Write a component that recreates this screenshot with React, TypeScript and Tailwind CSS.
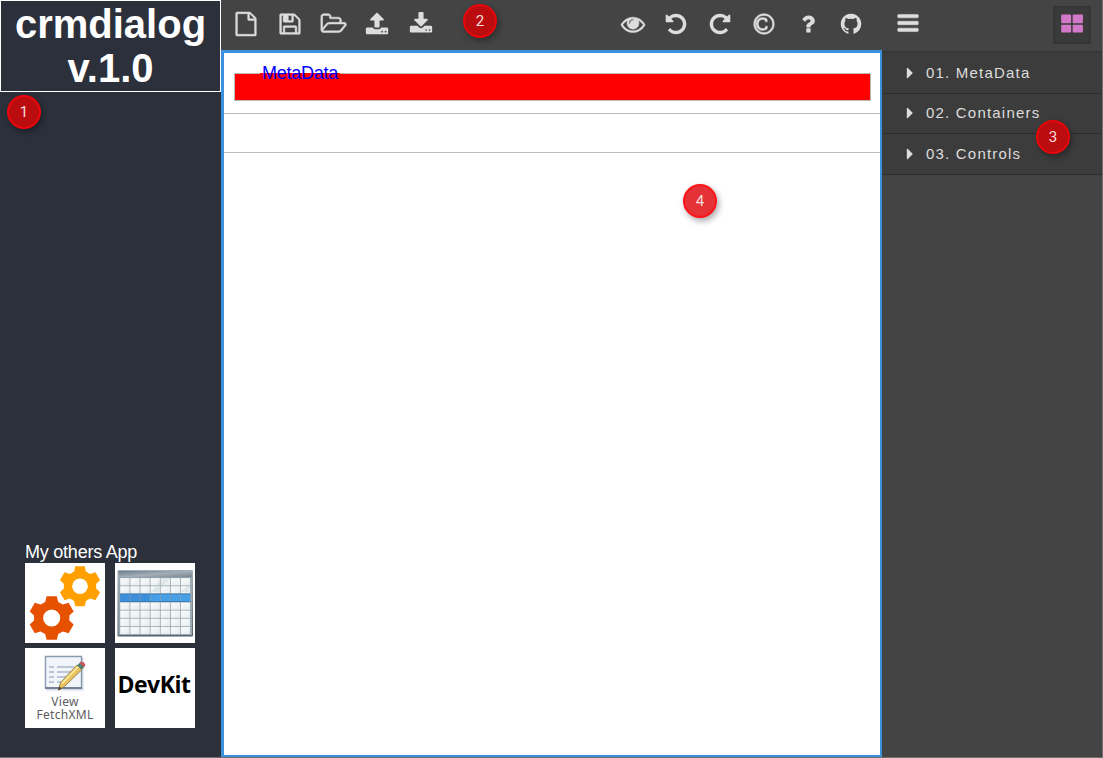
import React from 'react';

const P = {
  bars: 'M1664 1344v128q0 26-19 45t-45 19h-1408q-26 0-45-19t-19-45v-128q0-26 19-45t45-19h1408q26 0 45 19t19 45zm0-512v128q0 26-19 45t-45 19h-1408q-26 0-45-19t-19-45v-128q0-26 19-45t45-19h1408q26 0 45 19t19 45zm0-512v128q0 26-19 45t-45 19h-1408q-26 0-45-19t-19-45v-128q0-26 19-45t45-19h1408q26 0 45 19t19 45z',
  large: 'M832 1024v436q0 26-19 45t-45 19h-616q-26 0-45-19t-19-45v-436q0-26 19-45t45-19h616q26 0 45 19t19 45zM832 256v512q0 26-19 45t-45 19h-616q-26 0-45-19t-19-45v-512q0-26 19-45t45-19h616q26 0 45 19t19 45zM1712 1024v436q0 26-19 45t-45 19h-640q-26 0-45-19t-19-45v-436q0-26 19-45t45-19h640q26 0 45 19t19 45zM1712 256v512q0 26-19 45t-45 19h-640q-26 0-45-19t-19-45v-512q0-26 19-45t45-19h640q26 0 45 19t19 45z',
  file: 'M1596 380q28 28 48 76t20 88v1152q0 40-28 68t-68 28h-1344q-40 0-68-28t-28-68v-1600q0-40 28-68t68-28h896q40 0 88 20t76 48zm-444-244v376h376q-10-29-22-41l-313-313q-12-12-41-22zm384 1528v-1024h-416q-40 0-68-28t-28-68v-416h-768v1536h1280z',
  floppy: 'M512 1536h768v-384h-768v384zm896 0h128v-896q0-14-10-38.5t-20-34.5l-281-281q-10-10-34-20t-39-10v416q0 40-28 68t-68 28h-576q-40 0-68-28t-28-68v-416h-128v1280h128v-416q0-40 28-68t68-28h832q40 0 68 28t28 68v416zm-384-928v-320q0-13-9.5-22.5t-22.5-9.5h-192q-13 0-22.5 9.5t-9.5 22.5v320q0 13 9.5 22.5t22.5 9.5h192q13 0 22.5-9.5t9.5-22.5zm640 32v928q0 40-28 68t-68 28h-1344q-40 0-68-28t-28-68v-1344q0-40 28-68t68-28h928q40 0 88 20t76 48l280 280q28 28 48 76t20 88z',
  folder: 'M1845 931q0-35-53-35h-1088q-40 0-85.5 21.5t-71.5 52.5l-294 363q-18 24-18 40 0 35 53 35h1088q40 0 86-22t71-53l294-363q18-22 18-39zm-1141-163h768v-160q0-40-28-68t-68-28h-576q-40 0-68-28t-28-68v-64q0-40-28-68t-68-28h-320q-40 0-68 28t-28 68v853l256-315q44-53 116-87.5t140-34.5zm1269 163q0 62-46 120l-295 363q-43 53-116 87.5t-140 34.5h-1088q-92 0-158-66t-66-158v-960q0-92 66-158t158-66h320q92 0 158 66t66 158v32h544q92 0 158 66t66 158v160h192q54 0 99 24.5t67 70.5q15 32 15 68z',
  upload: 'M1344 1472q0-26-19-45t-45-19-45 19-19 45 19 45 45 19 45-19 19-45zm256 0q0-26-19-45t-45-19-45 19-19 45 19 45 45 19 45-19 19-45zm128-224v320q0 40-28 68t-68 28h-1472q-40 0-68-28t-28-68v-320q0-40 28-68t68-28h427q21 56 70.5 92t110.5 36h256q61 0 110.5-36t70.5-92h427q40 0 68 28t28 68zm-325-648q-17 40-59 40h-256v448q0 26-19 45t-45 19h-256q-26 0-45-19t-19-45v-448h-256q-42 0-59-40-17-39 14-69l448-448q18-19 45-19t45 19l448 448q31 30 14 69z',
  download: 'M1344 1344q0-26-19-45t-45-19-45 19-19 45 19 45 45 19 45-19 19-45zm256 0q0-26-19-45t-45-19-45 19-19 45 19 45 45 19 45-19 19-45zm128-224v320q0 40-28 68t-68 28h-1472q-40 0-68-28t-28-68v-320q0-40 28-68t68-28h465l135 136q58 56 136 56t136-56l136-136h464q40 0 68 28t28 68zm-325-569q17 41-14 70l-448 448q-18 19-45 19t-45-19l-448-448q-31-29-14-70 17-39 59-39h256v-448q0-26 19-45t45-19h256q26 0 45 19t19 45v448h256q42 0 59 39z',
  eye: 'M1664 960q-152-236-381-353 61 104 61 225 0 185-131.5 316.5t-316.5 131.5-316.5-131.5-131.5-316.5q0-121 61-225-229 117-381 353 133 205 333.5 326.5t434.5 121.5 434.5-121.5 333.5-326.5zm-720-384q0-20-14-34t-34-14q-125 0-214.5 89.5t-89.5 214.5q0 20 14 34t34 14 34-14 14-34q0-86 61-147t147-61q20 0 34-14t14-34zm848 384q0 34-20 69-140 230-376.5 368.5t-499.5 138.5-499.5-139-376.5-368q-20-35-20-69t20-69q140-229 376.5-368t499.5-139 499.5 139 376.5 368q20 35 20 69z',
  undo: 'M1664 896q0 156-61 298t-164 245-245 164-298 61q-172 0-327-72.5t-264-204.5q-7-10-6.5-22.5t8.5-20.5l137-138q10-9 25-9 16 2 23 12 73 95 179 147t225 52q104 0 198.5-40.5t163.5-109.5 109.5-163.5 40.5-198.5-40.5-198.5-109.5-163.5-163.5-109.5-198.5-40.5q-98 0-188 35.5t-160 101.5l137 138q31 30 14 69-17 40-59 40h-448q-26 0-45-19t-19-45v-448q0-42 40-59 39-17 69 14l130 129q107-101 244.5-156.5t284.5-55.5q156 0 298 61t245 164 164 245 61 298z',
  question: 'M1088 1256v240q0 16-12 28t-28 12h-240q-16 0-28-12t-12-28v-240q0-16 12-28t28-12h240q16 0 28 12t12 28zm316-600q0 54-15.5 101t-35 76.5-55 59.5-57.5 43.5-61 35.5q-41 23-68.5 65t-27.5 67q0 17-12 32.5t-28 15.5h-240q-15 0-25.5-18.5t-10.5-37.5v-45q0-83 65-156.5t143-108.5q59-27 84-56t25-76q0-42-46.5-74t-107.5-32q-65 0-108 29-35 25-107 115-13 16-31 16-12 0-25-8l-164-125q-13-10-15.5-25t5.5-28q160-266 464-266 80 0 161 31t146 83 106 127.5 41 158.5z',
  copyright: 'M1150 1074v109q0 50-36.5 89t-94 60.5-118 32.5-117.5 11q-205 0-342.5-139t-137.5-346q0-203 136-339t339-136q34 0 75.5 4.5t93 18 92.5 34 69 56.5 28 81v109q0 16-16 16h-118q-16 0-16-16v-70q0-43-65.5-67.5t-137.5-24.5q-140 0-228.5 91.5t-88.5 237.5q0 151 91.5 249.5t233.5 98.5q68 0 138-24t70-66v-70q0-7 4.5-11.5t10.5-4.5h119q6 0 11 4.5t5 11.5zm-254-818q-130 0-248.5 51t-204 136.5-136.5 204-51 248.5 51 248.5 136.5 204 204 136.5 248.5 51 248.5-51 204-136.5 136.5-204 51-248.5-51-248.5-136.5-204-204-136.5-248.5-51zm768 640q0 209-103 385.5t-279.5 279.5-385.5 103-385.5-103-279.5-279.5-103-385.5 103-385.5 279.5-279.5 385.5-103 385.5 103 279.5 279.5 103 385.5z',
  github: 'M896 128q209 0 385.5 103t279.5 279.5 103 385.5q0 251-146.5 451.5t-378.5 277.5q-27 5-40-7t-13-30q0-3 .5-76.5t.5-134.5q0-97-52-142 57-6 102.5-18t94-39 81-66.5 53-105 20.5-150.5q0-119-79-206 37-91-8-204-28-9-81 11t-92 44l-38 24q-93-26-192-26t-192 26q-16-11-42.5-27t-83.5-38.5-85-13.5q-45 113-8 204-79 87-79 206 0 85 20.5 150t52.5 105 80.5 67 94 39 102.5 18q-39 36-49 103-21 10-45 15t-57 5-65.5-21.5-55.5-62.5q-19-32-48.5-52t-49.5-24l-20-3q-21 0-29 4.5t-5 11.5 9 14 13 12l7 5q22 10 43.5 38t31.5 51l10 23q13 38 44 61.5t67 30 69.5 7 55.5-3.5l23-4q0 38 .5 88.5t.5 54.5q0 18-13 30t-40 7q-232-77-378.5-277.5t-146.5-451.5q0-209 103-385.5t279.5-279.5 385.5-103z',
  caret: 'M1152 896q0 26-19 45l-448 448q-19 19-45 19t-45-19-19-45v-896q0-26 19-45t45-19 45 19l448 448q19 19 19 45z',
};

type IconName = keyof typeof P;

const outlined: IconName[] = ['file', 'floppy', 'folder', 'copyright', 'eye', 'bars'];

function Icon({ name, flip = false }: { name: IconName; flip?: boolean }) {
  const wide = name === 'folder';
  const size = wide ? 'h-6 w-[27.4px]' : 'size-6';
  return (
    <svg
      viewBox={wide ? '0 0 2048 1792' : '0 0 1792 1792'}
      className={`${size} shrink-0 overflow-visible fill-current ${flip ? '-scale-x-100' : ''}`}
    >
      <path d={P[name]} stroke="currentColor" strokeWidth={outlined.includes(name) ? 38 : 0} />
    </svg>
  );
}

function Tool({ name, flip }: { name: IconName; flip?: boolean }) {
  return (
    <button className="flex w-[43.75px] shrink-0 justify-center">
      <Icon name={name} flip={flip} />
    </button>
  );
}

function Badge({ n, className }: { n: number; className: string }) {
  return (
    <span
      className={`absolute z-10 flex size-[34px] items-center justify-center rounded-full border-2 font-['Roboto',sans-serif] text-[15px] text-[#f5dede] shadow-[2px_3px_6px_rgba(0,0,0,0.35)] ${className}`}
    >
      {n}
    </span>
  );
}

const tooth = 'M-5.5-20h11l1.5 6.2 5 2.8 6.2-2 5.4 9.4-4.6 4.3v5.6l4.6 4.3-5.4 9.4-6.2-2-5 2.8L5.500 27h-11L-7 20.800l-5-2.800-6.200 2-5.400-9.400L-19 6.300V.7l-4.600-4.300 5.400-9.400 6.200 2 5-2.800z';

function Gear({ x, y, s, color }: { x: number; y: number; s: number; color: string }) {
  return (
    <g transform={`translate(${x} ${y}) scale(${s}) translate(0 -3.5)`}>
      <path d={tooth} fill={color} />
      <circle cy="3.5" r="9.2" fill="#fff" />
    </g>
  );
}

function GearsTile() {
  return (
    <svg viewBox="0 0 80 80" className="size-20 bg-white">
      <Gear x={55} y={23.2} s={0.85} color="#ffa000" />
      <Gear x={26.7} y={55} s={0.93} color="#e65100" />
    </svg>
  );
}

function TableTile() {
  const seven = [0, 1, 2, 3, 4, 5, 6];
  return (
    <svg viewBox="0 0 80 80" className="size-20 bg-white">
      <defs>
        <linearGradient id="frame" x1="0" y1="0" x2="0" y2="1">
          <stop offset="0" stopColor="#a3b0b9" />
          <stop offset="1" stopColor="#53636d" />
        </linearGradient>
        <linearGradient id="head" x1="0" y1="0" x2="1" y2="1">
          <stop offset="0" stopColor="#6f7e8b" />
          <stop offset=".5" stopColor="#a2afb9" />
          <stop offset="1" stopColor="#75838e" />
        </linearGradient>
        <linearGradient id="cell" x1="0" y1="0" x2="1" y2="1">
          <stop offset="0" stopColor="#fafcfc" />
          <stop offset="1" stopColor="#e6edef" />
        </linearGradient>
      </defs>
      <rect x="2.500" y="7" width="75.500" height="66.500" rx="1" fill="url(#frame)" />
      <rect x="3.500" y="8" width="73.500" height="6.500" fill="url(#head)" />
      <rect x="3.500" y="14.500" width="73.500" height="57.500" fill="#9caab2" />
      <rect x="4.500" y="14.500" width="71.500" height="57" fill="#8d9ba4" />
      {seven.map((r) =>
        seven.map((c) => (
          <rect
            key={`${r}-${c}`}
            x={5.2 + c * 10.1}
            y={15.1 + r * 8.1}
            width="9.4"
            height="7.4"
            fill={r === 2 ? (c < 3 ? '#398fdb' : '#46a0e8') : 'url(#cell)'}
          />
        )),
      )}
      <path d="M5 30.500h70.500v1H5zM5 38h70.500v1H5z" fill="#357fbd" />
      <path d="M36 29 47 15h8L43 29zM65 29l9-7v7z" fill="#b9cfcd" opacity=".35" />
    </svg>
  );
}

function FetchTile() {
  return (
    <div className="flex size-20 flex-col items-center bg-white pt-[4px]">
      <svg viewBox="0 0 44 40" className="h-10 w-11 shrink-0">
        <path d="M3 5.500h37.500v33H3z" fill="#d5dbe3" />
        <path d="M2.500 4.500h36v31.500h-36z" fill="#f1f5fa" stroke="#8b9bb2" strokeWidth="1.400" />
        <path d="M2 36h37" stroke="#64748a" strokeWidth="1.500" />
        <path d="M6 15h5M6 20h5M6 25h5M6 30h5M14 15h17M14 20h14M14 25h9M14 30h4" stroke="#a9b7ca" strokeWidth="1.700" />
        <path d="m34 13 5 4.500L22 34l-6.500 4 2-7.500z" fill="#e8c25f" stroke="#8a7444" strokeWidth=".8" />
        <path d="M35.500 14.500 19 31.500" stroke="#fbeaa0" strokeWidth="1.700" />
        <path d="m36.500 11 1.500-1.500q4 .5 4.500 4L40.500 15.500z" fill="#c8545c" />
        <path d="m34 13.500 2.500-2.500 4.500 4.500-2.500 2z" fill="#4c8171" />
        <path d="m15 38.500 1-4 3 2z" fill="#4a4238" />
      </svg>
      <div className="mt-[3px] text-center font-['Noto_Sans',sans-serif] text-[12px] leading-[13px] tracking-[0.3px] text-[#5c5c5c]">
        <div>View</div>
        <div>FetchXML</div>
      </div>
    </div>
  );
}

export default function App() {
  return (
    <div className="relative flex h-[758px] w-[1103px] overflow-hidden border-r border-b border-[#707070] bg-[#444] font-['Liberation_Sans',Arial,sans-serif]">
      <aside className="flex w-[221px] shrink-0 flex-col bg-[#2c303b] text-white">
        <h1 className="h-[92px] border border-white pt-px text-center text-[40px] leading-[44px] font-bold">
          crmdialog
          <br />
          v.1.0
        </h1>
        <div className="mt-[449px] ml-[25px] w-[170px]">
          <div className="h-[22px] text-[18px] leading-[22px] tracking-[-0.23px]">My others App</div>
          <div className="grid grid-cols-2 gap-x-[10px] gap-y-[5px]">
            <GearsTile />
            <TableTile />
            <FetchTile />
            <div className="flex size-20 items-center justify-center bg-white pr-[2px] pb-[7px] font-['Open_Sans',sans-serif] text-[23px] font-bold text-black">
              <span className="tracking-[-0.5px]">DevKit</span>
            </div>
          </div>
        </div>
      </aside>

      <main className="flex w-[661px] shrink-0 flex-col">
        <div className="flex h-[50px] justify-between pt-[11.7px] pr-[8.8px] pl-[3px] text-[#ddd]">
          <div className="flex">
            <Tool name="file" />
            <Tool name="floppy" />
            <Tool name="folder" />
            <Tool name="upload" />
            <Tool name="download" />
          </div>
          <div className="flex">
            <Tool name="eye" />
            <Tool name="undo" />
            <Tool name="undo" flip />
            <Tool name="copyright" />
            <Tool name="question" />
            <Tool name="github" />
          </div>
        </div>
        <div className="flex-1 border-[3px] border-r-2 border-b-2 border-[#3b91db] bg-white">
          <div className="h-[61px] border-b border-[#bbb] pt-5 pr-[9px] pl-[10px]">
            <div className="relative h-7 border border-[#bbb] bg-[#f00]">
              <span className="absolute top-[-11px] left-[25px] bg-[linear-gradient(transparent_10px,#f00_10px)] px-0.5 text-[18px] leading-[20px] tracking-[-0.25px] text-[#00f]">
                MetaData
              </span>
            </div>
          </div>
          <div className="h-[39px] border-b border-[#bbb]" />
        </div>
      </main>

      <aside className="flex-1 bg-[#444] text-[#ddd]">
        <div className="flex h-[51px] justify-between pt-[6px] pr-[11px] pl-[13.5px]">
          <span className="pt-[5.4px]">
            <Icon name="bars" />
          </span>
          <span className="flex size-[38px] justify-center rounded-[2px] bg-[#3a3a3a] pt-[5.6px] text-[#d278c9] shadow-[inset_0_0_3px_rgba(0,0,0,0.25)]">
            <Icon name="large" />
          </span>
        </div>
        <div className="border-t-2 border-[#373737]">
          {['01. MetaData', '02. Containers', '03. Controls'].map((t) => (
            <div
              key={t}
              className="flex h-[40.67px] items-center border-b border-[#2d2d2d] bg-[#3c3c3c] pl-[19px] text-[15px] tracking-[1.2px]"
            >
              <svg viewBox="0 0 1792 1792" className="mr-[7px] size-[18px] fill-current">
                <path d={P.caret} />
              </svg>
              {t}
            </div>
          ))}
        </div>
      </aside>

      <Badge n={1} className="top-[95px] left-[7px] border-[#e8070b] bg-[#bb0c10]" />
      <Badge n={2} className="top-[4px] left-[463px] border-[#e8070b] bg-[#bb0c10]" />
      <Badge n={3} className="top-[120px] left-[1036px] border-[#e8070b] bg-[#bb0c10]" />
      <Badge n={4} className="top-[184px] left-[683px] border-[#ff1418] bg-[#e53236]" />
    </div>
  );
}
